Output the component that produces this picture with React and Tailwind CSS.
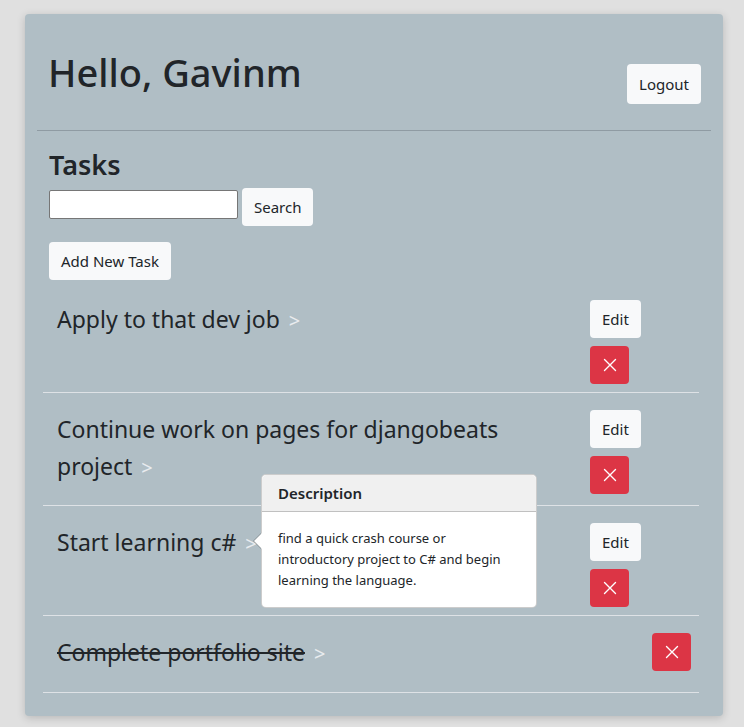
import React from 'react';

const XIcon = () => (
  <svg width="14" height="14" viewBox="0 0 14 14" fill="none" stroke="white" strokeWidth="1.4" strokeLinecap="round">
    <path d="M1.5 1.5 L12.5 12.5 M12.5 1.5 L1.5 12.5" />
  </svg>
);

const btnLight = 'bg-[#f8f9fa] text-[#212529] text-[15px] leading-6 px-3 py-[7px] rounded';
const btnRed = 'bg-[#dc3545] w-[39px] h-[38px] rounded flex items-center justify-center';

const Chevron = () => (
  <span className="text-[#e9ecef] text-[20px] leading-none ml-[9px] align-baseline">&gt;</span>
);

const Popover = () => (
  <div className="absolute top-[-32px] left-[218px] w-[276px] bg-white border border-[rgba(0,0,0,0.2)] rounded-[5px] z-10">
    {/* arrow */}
    <div className="absolute left-[-9px] top-[58px] w-0 h-0 border-y-[8px] border-y-transparent border-r-[8px] border-r-[rgba(0,0,0,0.25)]" />
    <div className="absolute left-[-8px] top-[58px] w-0 h-0 border-y-[8px] border-y-transparent border-r-[8px] border-r-white" />
    <div className="bg-[#f0f0f0] border-b border-[rgba(0,0,0,0.2)] rounded-t-[5px] px-4 py-2 text-[15px] leading-[20px] font-semibold text-[#212529]">
      Description
    </div>
    <div className="p-4 text-[13px] leading-[21px] text-[#212529]">
      find a quick crash course or
      <br />
      introductory project to C# and begin
      <br />
      learning the language.
    </div>
  </div>
);

const TaskRow = ({ title, done, popover }) => (
  <div className="relative flex border-b border-[#dee2e6] pt-[17px]">
    <div className="w-[547px] pl-[14px] pt-[1px] mb-[21px]">
      <div className="text-[23px] leading-[36.5px] text-[#212529] pr-12">
        <span className={done ? 'line-through decoration-[#212529] decoration-2' : ''}>{title}</span>
        <Chevron />
      </div>
    </div>
    {done ? (
      <div className="flex-1 flex justify-end pr-2">
        <button className={btnRed}>
          <XIcon />
        </button>
      </div>
    ) : (
      <div className="flex flex-col items-start gap-2 pb-2">
        <button className={btnLight}>Edit</button>
        <button className={btnRed}>
          <XIcon />
        </button>
      </div>
    )}
    {popover && <Popover />}
  </div>
);

export default function App() {
  return (
    <div
      className="min-h-[727px] bg-[#e0e0e0] pt-[14px]"
      style={{ fontFamily: '"Noto Sans", "Open Sans", sans-serif' }}
    >
      <div className="ml-[25px] w-[698px] bg-[#b0bec5] rounded-[4px] shadow-[0_2px_8px_rgba(0,0,0,0.18)] pt-[34px] px-3 pb-[23px]">
        {/* Header */}
        <div className="flex justify-between items-start h-[82px] pl-[11px] pr-[10px]">
          <h1 className="text-[38px] leading-[48px] font-medium text-[#212529]">Hello, Gavinm</h1>
          <button className={`${btnLight} mt-[16px] h-[40px]`}>Logout</button>
        </div>
        <div className="border-t border-[#8f9ba3]" />

        {/* Tasks */}
        <div className="pl-[12px] mt-[17px]">
          <h3 className="text-[27px] leading-[34px] font-semibold text-[#212529] mb-[6px]">Tasks</h3>
          <div className="flex items-start gap-1">
            <input className="w-[189px] h-[29px] mt-[2px] bg-white border border-[#767676] rounded-[2px] px-1 outline-none" />
            <button className={btnLight}>Search</button>
          </div>
          <button className={`${btnLight} mt-4`}>Add New Task</button>
        </div>

        <div className="ml-[6px] mr-[12px] mt-[3px]">
          <TaskRow title="Apply to that dev job" />
          <TaskRow title="Continue work on pages for djangobeats project" />
          <TaskRow title="Start learning c#" popover />
          <TaskRow title="Complete portfolio site" done />
        </div>
      </div>
    </div>
  );
}
